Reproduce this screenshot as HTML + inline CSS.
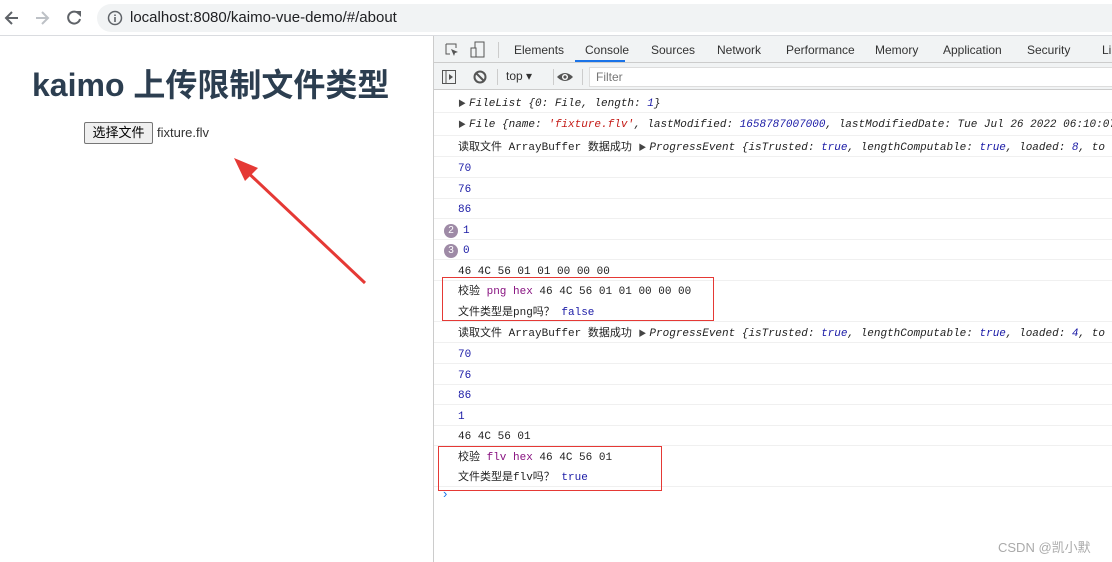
<!DOCTYPE html>
<html><head><meta charset="utf-8"><style>
*{margin:0;padding:0;box-sizing:border-box}
body{width:1112px;height:562px;overflow:hidden;background:#fff;font-family:"Liberation Sans","Noto Sans CJK SC",sans-serif;position:relative}
.abs{position:absolute}
.top{left:0;top:0;width:1112px;height:36px;background:#fff;border-bottom:1px solid #dadce0}
.url{left:97px;top:4px;width:1030px;height:28px;border-radius:14px;background:#f1f3f4;font-size:15px;color:#202124;line-height:28px;padding-left:33px}
h1{position:absolute;left:32px;top:60px;font-size:32px;font-weight:bold;color:#2c3e50;white-space:nowrap}
.btn{left:84px;top:122px;width:69px;height:22px;border:1px solid #767676;border-radius:2px;background:#efefef;font-size:13px;text-align:center;line-height:20px;color:#000}
.fn{left:157px;top:125px;font-size:13px;color:#333}
.dev{left:433px;top:36px;width:679px;height:526px;border-left:1px solid #ccc;background:#fff}
.tabs{left:0;top:0;width:679px;height:27px;background:#f1f3f4;border-bottom:1px solid #ccc;font-size:12px;color:#333}
.tabs span{position:absolute;top:7px}
.tb{left:0;top:27px;width:679px;height:27px;background:#f1f3f4;border-bottom:1px solid #ccc;font-size:12px;color:#333}
.row{position:absolute;left:0;width:679px;height:21px;border-bottom:1px solid #f0f0f0;font-family:"Liberation Mono","Noto Sans CJK SC",monospace;font-size:11px;line-height:24px;padding-left:24px;white-space:nowrap;color:#222}
.b{color:#1a1aa6}.i{font-style:italic}.r{color:#c41a16}.g{color:#555}
.tri{font-size:8px;color:#444;margin-right:3px;font-style:normal}
.bd{padding-left:29px}
.badge{position:absolute;left:10px;top:5px;width:14px;height:14px;border-radius:7px;background:#9e8aa6;color:#fff;font-size:10px;line-height:14px;text-align:center;font-family:"Liberation Sans",sans-serif}
.box{position:absolute;border:1px solid #e53935}
</style></head><body>
<div class="abs top">
<svg class="abs" style="left:2px;top:8px" width="20" height="20"><path d="M16 10H5M10 4L4 10l6 6" stroke="#5f6368" stroke-width="2" fill="none"/></svg>
<svg class="abs" style="left:32px;top:8px" width="20" height="20"><path d="M4 10h11M10 4l6 6-6 6" stroke="#bdc1c6" stroke-width="2" fill="none"/></svg>
<svg class="abs" style="left:64px;top:8px" width="20" height="20"><path d="M15 6A6 6 0 1 0 16 11" stroke="#5f6368" stroke-width="2" fill="none"/><path d="M11 3h6v6z" fill="#5f6368"/></svg>
<div class="abs url">localhost:8080/kaimo-vue-demo/#/about</div>
<svg class="abs" style="left:107px;top:10px" width="16" height="16"><circle cx="8" cy="8" r="6.5" stroke="#5f6368" stroke-width="1.5" fill="none"/><path d="M8 7v5M8 4.5v1.5" stroke="#5f6368" stroke-width="1.6"/></svg>
</div>
<h1>kaimo 上传限制文件类型</h1>
<div class="abs btn">选择文件</div>
<div class="abs fn">fixture.flv</div>
<svg class="abs" style="left:228px;top:150px" width="145" height="140"><path d="M137 133L14 17" stroke="#e53935" stroke-width="3"/><path d="M6 8L30 18L17 31Z" fill="#e53935"/></svg>
<div class="abs dev">
<div class="abs tabs">
<svg class="abs" style="left:10px;top:6px" width="16" height="16"><path d="M2 2h10v4M2 2v10h4" stroke="#555" fill="none"/><path d="M7 7l7 3-3 1-1 3z" fill="#555"/></svg>
<svg class="abs" style="left:36px;top:5px" width="16" height="18"><rect x="5" y="1" width="9" height="15" stroke="#555" fill="none"/><rect x="1" y="7" width="5" height="9" stroke="#555" fill="#f1f3f4"/></svg>
<div class="abs" style="left:64px;top:6px;width:1px;height:16px;background:#ccc"></div>
<span style="left:80px">Elements</span>
<span style="left:151px">Console</span>
<div class="abs" style="left:141px;top:24px;width:50px;height:2px;background:#1a73e8"></div>
<span style="left:217px">Sources</span>
<span style="left:283px">Network</span>
<span style="left:352px">Performance</span>
<span style="left:441px">Memory</span>
<span style="left:509px">Application</span>
<span style="left:593px">Security</span>
<span style="left:668px">Li</span>
</div>
<div class="abs tb">
<svg class="abs" style="left:7px;top:6px" width="16" height="16"><rect x="1.5" y="1.5" width="13" height="13" stroke="#555" fill="none"/><path d="M5 2v12" stroke="#555"/><path d="M8 5l4 3-4 3z" fill="#555"/></svg>
<svg class="abs" style="left:38px;top:6px" width="16" height="16"><circle cx="8" cy="8" r="5.5" stroke="#555" stroke-width="2" fill="none"/><path d="M4 4l8 8" stroke="#555" stroke-width="2"/></svg>
<div class="abs" style="left:63px;top:6px;width:1px;height:16px;background:#ccc"></div>
<span class="abs" style="left:72px;top:6px">top ▾</span>
<div class="abs" style="left:119px;top:6px;width:1px;height:16px;background:#ccc"></div>
<svg class="abs" style="left:122px;top:6px" width="18" height="16"><path d="M1 8Q9 0 17 8Q9 16 1 8z" fill="#555"/><circle cx="9" cy="8" r="3" fill="#fff"/><circle cx="9" cy="8" r="1.6" fill="#555"/></svg>
<div class="abs" style="left:148px;top:6px;width:1px;height:16px;background:#ccc"></div>
<div class="abs" style="left:155px;top:4px;width:524px;height:20px;background:#fff;border:1px solid #ddd;padding-left:6px;line-height:18px;color:#777">Filter</div>
</div>
<div class="row i" style="top:56px"><span class="tri">▶</span>FileList {0: File, length: <span class="b">1</span>}</div>
<div class="row i" style="top:77px;height:23px;line-height:24px"><span class="tri">▶</span>File {name: <span class="r">'fixture.flv'</span>, lastModified: <span class="b">1658787007000</span>, lastModifiedDate: Tue Jul 26 2022 06:10:07</div>
<div class="row" style="top:100px">读取文件 ArrayBuffer 数据成功 <span class="i"><span class="tri">▶</span>ProgressEvent {isTrusted: <span class="b">true</span>, lengthComputable: <span class="b">true</span>, loaded: <span class="b">8</span>, to</span></div>
<div class="row b" style="top:121px">70</div>
<div class="row b" style="top:142px">76</div>
<div class="row b" style="top:162px">86</div>
<div class="row b bd" style="top:183px"><span class="badge">2</span>1</div>
<div class="row b bd" style="top:203px"><span class="badge">3</span>0</div>
<div class="row" style="top:224px">46 4C 56 01 01 00 00 00</div>
<div class="row" style="top:244px;border:none">校验 <span style="color:#881280">png hex</span> 46 4C 56 01 01 00 00 00</div>
<div class="row" style="top:265px">文件类型是png吗？ <span class="b">false</span></div>
<div class="row" style="top:286px">读取文件 ArrayBuffer 数据成功 <span class="i"><span class="tri">▶</span>ProgressEvent {isTrusted: <span class="b">true</span>, lengthComputable: <span class="b">true</span>, loaded: <span class="b">4</span>, to</span></div>
<div class="row b" style="top:307px">70</div>
<div class="row b" style="top:328px">76</div>
<div class="row b" style="top:348px">86</div>
<div class="row b" style="top:369px">1</div>
<div class="row" style="top:389px">46 4C 56 01</div>
<div class="row" style="top:410px;border:none">校验 <span style="color:#881280">flv hex</span> 46 4C 56 01</div>
<div class="row" style="top:430px">文件类型是flv吗？ <span class="b">true</span></div>
<div class="abs" style="left:9px;top:450px;color:#1a73e8;font-size:13px">›</div>
<div class="box" style="left:8px;top:241px;width:272px;height:44px"></div>
<div class="box" style="left:4px;top:410px;width:224px;height:45px"></div>
<div class="abs" style="left:564px;top:501px;font-size:13px;color:#aaa">CSDN @凯小默</div>
</div>
</body></html>
